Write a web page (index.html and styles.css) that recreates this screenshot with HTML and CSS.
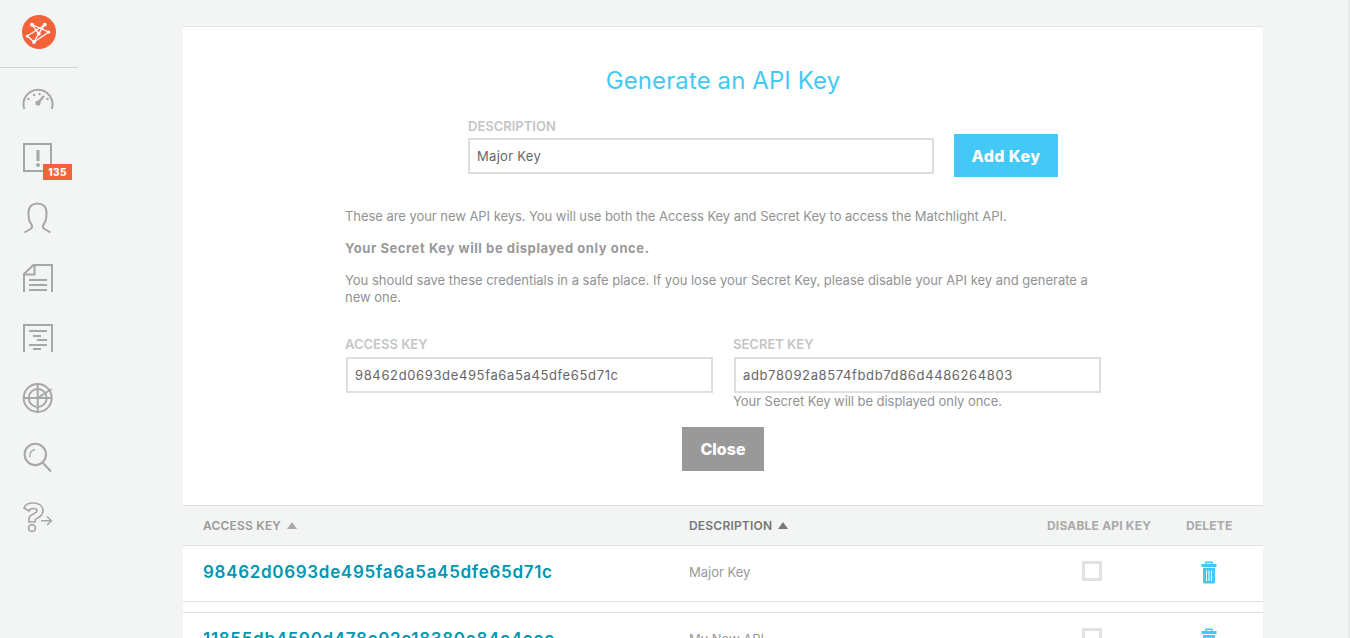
FILE: index.html
```html
<!DOCTYPE html>
<html lang="en">
<head>
<meta charset="utf-8">
<title>API Keys</title>
<link rel="stylesheet" href="styles.css">
</head>
<body>
<aside class="sidebar">
  <div class="brand">
    <svg class="logo" width="34" height="34" viewBox="0 0 34 34">
      <circle cx="17" cy="17" r="17" fill="#f4623a"/>
      <g fill="none" stroke="#fff" stroke-width="1.3">
        <path d="M10 9.700 L26.700 17 L12 27 L5.300 21 L22.700 9.700"/>
        <path d="M10 9.700 L16.700 18.700 L22.700 9.700 M16.700 18.700 L12 27"/>
      </g>
      <g fill="#fff"><circle cx="10" cy="9.700" r="1.900"/><circle cx="22.700" cy="9.700" r="1.900"/><circle cx="16.700" cy="18.700" r="2"/><circle cx="5.300" cy="21" r="1.600"/><circle cx="26.700" cy="17" r="1.600"/><circle cx="12" cy="27" r="1.900"/></g>
    </svg>
  </div>
  <nav class="nav">
    <a class="nav-item"><svg class="icon" viewBox="0 0 40 40"><path d="M6.300 31 A14.500 14.500 0 1 1 33.700 31"/><circle class="fill" cx="20" cy="25" r="2.600"/><path class="thick" d="M20 25 L26 18"/><circle class="fill" cx="10.500" cy="21" r="1.200"/><circle class="fill" cx="16" cy="17" r="1.200"/><circle class="fill" cx="21.500" cy="16" r="1.200"/><circle class="fill" cx="29.500" cy="21" r="1.200"/></svg></a>
    <a class="nav-item"><svg class="icon" viewBox="0 0 40 40"><rect x="6" y="6" width="27" height="27"/><rect class="fill" x="18.500" y="12" width="3" height="11"/><circle class="fill" cx="20" cy="27" r="2"/></svg><span class="badge">135</span></a>
    <a class="nav-item"><svg class="icon" viewBox="0 0 40 40"><path d="M6.500 34.500 L12.500 31 Q15 29.500 13.500 26.500 C11 24 10.500 20 10.500 15 C10.500 8.500 14.500 5.500 19.500 5.500 C24.500 5.500 28.500 8.500 28.500 15 C28.500 20 28 24 25.500 26.500 Q24 29.500 26.500 31 L32.500 34.500"/></svg></a>
    <a class="nav-item"><svg class="icon" viewBox="0 0 40 40"><path d="M6 34 V16 L15.500 7 H34 V34"/><path d="M16.500 7 V16.500 H6"/><path d="M11 22 H29 M11 27 H29 M11 32 H29"/></svg></a>
    <a class="nav-item"><svg class="icon" viewBox="0 0 40 40"><path d="M6 34 V7 H34 V34"/><path d="M11 13 H29 M15 18 H23 M19 22 H29 M11 27 H29 M15 31 H23"/></svg></a>
    <a class="nav-item"><svg class="icon" viewBox="0 0 40 40"><circle cx="19.700" cy="20" r="14"/><circle cx="19.700" cy="20" r="9"/><path d="M19.700 6 V34 M5.700 20 H33.700 M19.700 20 L33.500 11"/></svg></a>
    <a class="nav-item"><svg class="icon" viewBox="0 0 40 40"><circle cx="17.300" cy="16.500" r="10.700"/><path d="M25 25 L33 33.500"/><path class="thin" d="M12 19 A6 6 0 0 1 17 11.500"/></svg></a>
    <a class="nav-item"><svg class="icon" viewBox="0 0 40 40"><path class="mid" d="M6 10 C7 6 11 5 15 5 C21 5 25 8 25 13 C25 17 22 19 18.500 20.500 Q17 21.500 17 24 H11 V21 Q11 18 14.500 16.500 C17.500 15 19 14.500 19 12.500 C19 11 17 10.500 15 10.500 C13 10.500 11.500 11.500 11 13 Z"/><circle class="mid" cx="14" cy="30" r="3.400"/><path class="thin" d="M23 22.700 H33.500 M29 18.500 L33.500 22.700 L29 27"/></svg></a>
  </nav>
</aside>
<main class="panel">
  <section class="generator">
    <h1 class="title">Generate an API Key</h1>
    <div class="desc-row">
      <div class="desc-field">
        <div class="label">DESCRIPTION</div>
        <div class="field field-tight">Major Key</div>
      </div>
      <button class="btn btn-add">Add Key</button>
    </div>
    <div class="copy">
      <p>These are your new API keys. You will use both the Access Key and Secret Key to access the Matchlight API.</p>
      <p class="strong">Your Secret Key will be displayed only once.</p>
      <p class="long">You should save these credentials in a safe place. If you lose your Secret Key, please disable your API key and generate a new one.</p>
    </div>
    <div class="keys">
      <div class="key-col">
        <div class="label">ACCESS KEY</div>
        <div class="field field-key">98462d0693de495fa6a5a45dfe65d71c</div>
      </div>
      <div class="key-col">
        <div class="label">SECRET KEY</div>
        <div class="field field-key">adb78092a8574fbdb7d86d4486264803</div>
        <div class="hint">Your Secret Key will be displayed only once.</div>
      </div>
    </div>
    <button class="btn btn-close">Close</button>
  </section>
  <div class="table-head grid">
    <div class="th">ACCESS KEY <span class="tri"></span></div>
    <div class="th th-dark">DESCRIPTION <span class="tri tri-dark"></span></div>
    <div class="th th-bold">DISABLE API KEY</div>
    <div class="th th-bold">DELETE</div>
  </div>
  <div class="row grid">
    <a class="key-link">98462d0693de495fa6a5a45dfe65d71c</a>
    <div class="desc">Major Key</div>
    <div class="check-cell"><span class="check"></span></div>
    <div class="trash-cell"><svg class="trash" width="16" height="23" viewBox="0 0 16 23"><path class="trash-lid" d="M5 3 V1.200 H11 V3"/><rect x="0.500" y="3" width="15" height="3" fill="#44c8f5"/><path fill="#44c8f5" d="M2 7 H14 V21 Q14 22.500 12.500 22.500 H3.500 Q2 22.500 2 21 Z"/><path stroke="#fff" stroke-width="1" d="M5.500 9.500 V20 M8 9.500 V20 M10.500 9.500 V20"/></svg></div>
  </div>
  <div class="row row-next grid">
    <a class="key-link">11855db4590d478e92c18380e84c4eee</a>
    <div class="desc">My New API</div>
    <div class="check-cell"><span class="check"></span></div>
    <div class="trash-cell"><svg class="trash" width="16" height="23" viewBox="0 0 16 23"><path class="trash-lid" d="M5 3 V1.200 H11 V3"/><rect x="0.500" y="3" width="15" height="3" fill="#44c8f5"/><path fill="#44c8f5" d="M2 7 H14 V21 Q14 22.500 12.500 22.500 H3.500 Q2 22.500 2 21 Z"/><path stroke="#fff" stroke-width="1" d="M5.500 9.500 V20 M8 9.500 V20 M10.500 9.500 V20"/></svg></div>
  </div>
</main>
</body>
</html>
```
FILE: styles.css
```css
* { box-sizing: border-box; }
html, body { height: 100%; }
body {
  margin: 0;
  height: 638px;
  overflow: hidden;
  display: flex;
  align-items: flex-start;
  background: #f3f5f4;
  border-right: 2px solid #e9ebea;
  font-family: Inter, "Liberation Sans", sans-serif;
  color: #777;
}
.sidebar { width: 78px; flex: none; margin-right: 105px; }
.brand {
  height: 68px;
  border-bottom: 1px solid #d2d4d3;
  padding: 15px 0 0 22px;
}
.logo { display: block; }
.nav { display: flex; flex-direction: column; }
.nav-item {
  position: relative;
  height: 60px;
  display: flex;
  align-items: center;
  padding-left: 18px;
}
.icon { width: 40px; height: 40px; fill: none; stroke: #a6a8a7; stroke-width: 2; display: block; }
.icon .fill { fill: #a6a8a7; stroke: none; }
.icon .thick { stroke-width: 2.4; }
.icon .mid { stroke-width: 1.7; }
.icon .thin { stroke-width: 1.5; }
.badge {
  position: absolute;
  left: 43px;
  top: 36px;
  width: 29px;
  height: 16px;
  background: #f4623a;
  color: #fff;
  font-size: 10px;
  font-weight: 800;
  letter-spacing: 0.3px;
  line-height: 16px;
  text-align: center;
}
.panel { width: 1080px; flex: none; margin-top: 26px; background: #fff; border-top: 1px solid #e4e6e5; }
.generator {
  display: flex;
  flex-direction: column;
  align-items: flex-start;
  height: 478px;
  padding: 38px 0 0 162px;
}
.title {
  align-self: flex-start;
  margin: 0 0 0 -162px;
  width: 1080px;
  text-align: center;
  font-size: 24px;
  line-height: 32px;
  font-weight: 400;
  letter-spacing: 0.1px;
  color: #44c8f5;
}
.desc-row { display: flex; align-items: flex-end; gap: 20px; margin: 22px 0 0 123px; }
.desc-field { width: 466px; }
.label { font-size: 13px; line-height: 14px; font-weight: 600; color: #c4c6c5; }
.field {
  height: 36px;
  margin-top: 6px;
  border: 2px solid #dedede;
  padding-left: 7px;
  font-size: 13px;
  line-height: 32px;
  color: #666;
  background: #fff;
}
.field-tight { margin-top: 5px; letter-spacing: 0.3px; }
.field-key { letter-spacing: 0.63px; }
.btn {
  border: 0;
  font-family: inherit;
  font-size: 16px;
  font-weight: 800;
  color: #fff;
  padding: 0;
}
.btn-add { width: 104px; height: 43px; background: #44c8f5; margin-bottom: -3px; letter-spacing: 0.4px; }
.copy { width: 756px; margin-top: 34px; font-size: 13px; line-height: 17px; letter-spacing: -0.05px; color: #929292; }
.copy p { margin: 0 0 15px; }
.copy .strong { font-weight: 700; letter-spacing: 0.58px; color: #999; }
.copy .long { letter-spacing: -0.02px; }
.keys { display: flex; gap: 20px; margin-top: 16px; }
.key-col { width: 368px; }
.key-col .field { margin-left: 1px; }
.hint { font-size: 13px; line-height: 17px; margin-top: 0; letter-spacing: -0.05px; color: #929292; }
.btn-close { width: 82px; height: 44px; background: #999; align-self: flex-start; margin: 17px 0 0 337px; }
.grid { display: grid; grid-template-columns: 486px 358px 139px 46px; padding-left: 20px; align-items: center; }
.table-head { height: 41px; background: #f3f5f4; border-top: 1px solid #dfe1e0; border-bottom: 1px solid #dfe1e0; }
.th { font-size: 12px; font-weight: 600; letter-spacing: 0.2px; color: #999; white-space: nowrap; }
.th-dark { color: #777; }
.th-bold { font-weight: 700; color: #aaa; }
.tri { display: inline-block; width: 0; height: 0; margin-left: 3px; vertical-align: 1px; border-left: 5px solid transparent; border-right: 5px solid transparent; border-bottom: 7px solid #aaa; }
.tri-dark { border-bottom-color: #777; }
.row { height: 56px; padding-bottom: 4px; background: #fff; border-bottom: 1px solid #dfe1e0; }
.row-next { margin-top: 10px; border-top: 1px solid #dfe1e0; height: 57px; }
.key-link { font-size: 17px; font-weight: 600; letter-spacing: 0.69px; color: #0096b1; }
.desc { font-size: 13px; color: #999; }
.check-cell { padding-left: 35px; }
.check { display: block; width: 20px; height: 20px; margin-top: -1px; border: 3px solid #e2e2e2; }
.trash-cell { display: flex; justify-content: center; }
.trash { display: block; margin-top: 1px; }
.trash-lid { fill: none; stroke: #44c8f5; stroke-width: 1.5; }
```
